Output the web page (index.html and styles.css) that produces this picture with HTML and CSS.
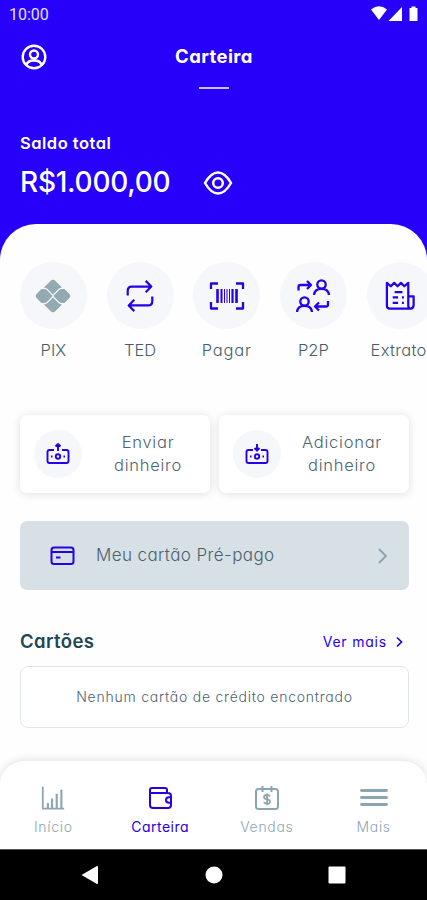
FILE: index.html
```html
<!DOCTYPE html>
<html lang="pt-BR">
<head>
<meta charset="utf-8">
<meta name="viewport" content="width=device-width, initial-scale=1">
<title>Carteira</title>
<link rel="stylesheet" href="styles.css">
</head>
<body>
<div class="app">
  <header class="hero">
    <div class="status">
      <span class="clock">10:00</span>
      <svg class="status-icons" width="50" height="18" viewBox="0 0 50 18" fill="#fff"><path d="M1 4.500Q9 -2 17 4.500L9 15Z"/><path d="M32 2V16H18.500Z"/><path d="M39.500 3h2V1.500h4V3h2V16h-8Z"/></svg>
    </div>
    <div class="topbar">
      <svg class="profile" width="26" height="26" viewBox="0 0 26 26" fill="none" stroke="#fff" stroke-width="2.400"><circle cx="13" cy="13" r="11.300"/><circle cx="13" cy="10.500" r="4"/><path d="M5.500 21Q6.500 16.500 13 16.500T20.500 21"/></svg>
      <h1 class="title">Carteira</h1>
      <span></span>
    </div>
    <div class="mark"></div>
    <p class="balance-label">Saldo total</p>
    <div class="balance">
      <span class="amount">R$1.000,00</span>
      <svg width="30" height="26" viewBox="0 0 30 26" fill="none" stroke="#fff" stroke-width="2.500"><path d="M2 13Q8 2.500 15 2.500T28 13Q22 23.500 15 23.500T2 13Z"/><circle cx="15" cy="13" r="4.800"/></svg>
    </div>
  </header>

  <main class="sheet">
    <nav class="actions">
      <div class="action"><span class="disc"><svg width="36" height="36" viewBox="0 0 36 36" fill="#93aab3"><path d="M9 9.500L15.500 3Q18 .5 20.500 3L27 9.500Q25 9.700 23.500 11L18 16.500L12.500 11Q11 9.700 9 9.500Z"/><path d="M9 26.500L15.500 33Q18 35.500 20.500 33L27 26.500Q25 26.300 23.500 25L18 19.500L12.500 25Q11 26.300 9 26.500Z"/><path d="M6.500 11H9Q10.700 11 12 12.300L17 17.300Q17.700 18 17 18.700L12 23.700Q10.700 25 9 25H6.500L2 20.500Q-.5 18 2 15.500Z"/><path d="M29.500 11H27Q25.300 11 24 12.300L19 17.300Q18.300 18 19 18.700L24 23.700Q25.300 25 27 25H29.500L34 20.500Q36.500 18 34 15.500Z"/></svg></span><span class="action-name">PIX</span></div>
      <div class="action"><span class="disc"><svg width="34" height="36" viewBox="0 0 36 36" class="line bold"><path d="M5 17.500V12.500Q5 8 9.500 8H30M24 2L30 8L24 14M31 18.500V23.500Q31 28 26.500 28H6M12 22L6 28L12 34"/></svg></span><span class="action-name">TED</span></div>
      <div class="action wide"><span class="disc"><svg width="36" height="36" viewBox="0 0 36 36" class="line bold"><path d="M2 11V5.500H9M27 5.500H34V11M2 24V30.500H9M27 30.500H34V24"/><path d="M8.500 11V25M27.500 11V25" stroke-width="2.600"/><path d="M12.500 11V25" stroke-width="2"/><path d="M15.500 11V25M18 11V25M20.500 11V25" stroke-width="1"/><path d="M23.500 11V25" stroke-width="2.200"/></svg></span><span class="action-name">Pagar</span></div>
      <div class="action"><span class="disc"><svg width="36" height="36" viewBox="0 0 36 36" class="line bold"><path d="M3.500 12.500V9Q3.500 7 5.500 7H15M12 3L16 7L12 11"/><circle cx="26.500" cy="6.500" r="4.200"/><path d="M19 17Q19.500 10.800 26.500 10.800T34 17"/><circle cx="9.500" cy="23.500" r="4.200"/><path d="M2 34Q2.500 27.800 9.500 27.800T17 34"/><path d="M33 23V26.500Q33 28.500 31 28.500H21M24 24.500L20 28.500L24 32.500"/></svg></span><span class="action-name">P2P</span></div>
      <div class="action last"><span class="disc"><svg width="35" height="35" viewBox="0 0 36 36" class="line bold"><path d="M29 31.500H7Q4 31.500 4 28.500V5L8 8.500L11.500 5L15 8.500L18.500 5L22 8.500L26 5V28Q26 31.500 28.500 31.500T31.500 28V19H26"/><path d="M12 14.500H20M10 20H15.500M19.500 20H21.500M10 25.500H15.500M19.500 25.500H21.500"/></svg></span><span class="action-name">Extrato</span></div>
    </nav>

    <section class="transfers">
      <div class="transfer"><span class="mini-disc"><svg width="24" height="24" viewBox="0 0 24 24" class="line thin"><path d="M8 8H3.500Q1.500 8 1.500 10V19Q1.500 21 3.500 21H20.500Q22.500 21 22.500 19V10Q22.500 8 20.500 8H16M12 9V2.500M9.500 4.500L12 2L14.500 4.500M5 14.500H6.500M17.500 14.500H19"/><circle cx="12" cy="14.500" r="2.200"/></svg></span><span class="transfer-name">Enviar<br>dinheiro</span></div>
      <div class="transfer add"><span class="mini-disc"><svg width="24" height="24" viewBox="0 0 24 24" class="line thin"><path d="M8 8H3.500Q1.500 8 1.500 10V19Q1.500 21 3.500 21H20.500Q22.500 21 22.500 19V10Q22.500 8 20.500 8H16M12 8.500V2M9.500 6L12 8.700L14.500 6M5 14.500H6.500M17.500 14.500H19"/><circle cx="12" cy="14.500" r="2.200"/></svg></span><span class="transfer-name">Adicionar<br>dinheiro</span></div>
    </section>

    <div class="prepaid">
      <svg width="26" height="20" viewBox="0 0 26 20" class="line"><rect x="1.500" y="1.500" width="22" height="16.500" rx="2.500"/><path d="M2 6H23.500M6 11.500H10.500"/></svg>
      <span class="prepaid-name">Meu cartão Pré-pago</span>
      <svg width="10" height="18" viewBox="0 0 10 18" fill="none" stroke="#8ba2ae" stroke-width="1.800"><path d="M1 2L8 9L1 16"/></svg>
    </div>

    <div class="cards-head">
      <h2>Cartões</h2>
      <span class="more"><span>Ver mais</span><svg width="8" height="12" viewBox="0 0 8 12" fill="none" stroke="#2600f5" stroke-width="1.700"><path d="M1 1.500L5.500 6L1 10.500"/></svg></span>
    </div>
    <div class="empty"><span>Nenhum cartão de crédito encontrado</span></div>

    <nav class="tabs">
      <div class="tab"><svg width="26" height="28" viewBox="0 0 28 28" class="line"><path d="M3 1.500V25.500H26" stroke-width="1.900"/><path d="M8.500 25V19.500M13 25V14.500M18 25V9.500M23 25V5" stroke-width="2.300"/></svg><span>Início</span></div>
      <div class="tab active"><svg width="28" height="28" viewBox="-1 0 28 28" class="line"><path d="M20 8.500V6Q20 4 18 4H5Q3 4 3 6V21Q3 24 6 24H21Q24 24 24 21V12Q24 9 21 9H3M24.500 13.200H22Q19 13.200 19 16T22 18.800H24.500"/></svg><span>Carteira</span></div>
      <div class="tab"><svg width="28" height="28" viewBox="0 0 28 28" class="line"><rect x="3" y="5" width="22" height="20" rx="2.500"/><path d="M9.500 2V8M18.500 2V8"/><path d="M17 12.500Q16.500 11 14 11Q11 11 11 13T14 15.300T17 17.700T14 19.700Q11.500 19.700 11 18M14 9.500V21.300" stroke-width="1.800"/></svg><span>Vendas</span></div>
      <div class="tab"><svg width="28" height="28" viewBox="0 0 28 28" class="line" stroke-linecap="round"><path d="M1.500 6.500H26.500M1.500 13.500H26.500M1.500 20.500H26.500" stroke-width="2.900"/></svg><span>Mais</span></div>
    </nav>
  </main>

  <footer class="system">
    <svg width="18" height="20" viewBox="0 0 18 20" fill="#fff"><path d="M.5 10L16 1Q17 .7 17 2V18Q17 19.300 16 19Z"/></svg>
    <svg width="18" height="18" viewBox="0 0 18 18" fill="#fff"><circle cx="9" cy="9" r="8.500"/></svg>
    <svg width="18" height="18" viewBox="0 0 18 18" fill="#fff"><rect x=".5" y=".5" width="17" height="17" rx="1"/></svg>
  </footer>
</div>
</body>
</html>
```
FILE: styles.css
```css
* { box-sizing: border-box; }
body { margin: 0; font-family: Inter, "Open Sans", sans-serif; font-feature-settings: "cv11" 1; color: #4d6370; }
h1, h2, p { margin: 0; }
svg { display: block; flex: none; }
.line { fill: none; stroke: currentColor; stroke-width: 2; stroke-linejoin: round; }
.bold { stroke-width: 2.3; }
.thin { stroke-width: 1.9; }
.app { width: 427px; height: 900px; overflow: hidden; display: flex; flex-direction: column; background: #2600f9; }
.hero { height: 224px; flex: none; color: #fff; }
.status { height: 28px; padding: 0 7px 0 9px; display: flex; justify-content: space-between; align-items: center; }
.clock { font-family: Roboto, sans-serif; font-size: 16px; line-height: 28px; padding-top: 1px; color: #e5e1ff; }
.status-icons { margin-top: -1px; }
.topbar { height: 56px; padding: 0 20px 0 21px; display: grid; grid-template-columns: 26px 1fr 26px; align-items: center; }
.title { text-align: center; font-size: 18.500px; font-weight: 700; letter-spacing: .4px; line-height: 24px; }
.profile { margin-top: 1px; }
.mark { width: 30px; height: 2px; margin: 3px auto 0; background: #c9c0ff; }
.balance-label { margin: 42px 0 0 20px; font-size: 16.500px; font-weight: 600; letter-spacing: .5px; line-height: 24px; }
.balance { display: flex; align-items: center; gap: 32px; height: 50px; margin: 3px 0 0 20px; }
.amount { width: 151px; margin-top: -3px; font-size: 28px; font-weight: 500; letter-spacing: -.25px; white-space: nowrap; }
.sheet { flex: 1; min-height: 0; display: flex; flex-direction: column; background: #fefefe; border-radius: 36px 36px 0 0; }
.actions { display: flex; gap: 20px; padding: 38px 0 0 20px; height: 191px; overflow: hidden; flex: none; }
.action { width: 66.700px; flex: none; display: flex; flex-direction: column; align-items: center; color: #2600e8; }
.disc { width: 67px; height: 67px; flex: none; border-radius: 50%; background: #f5f7fb; display: grid; place-items: center; }
.action-name { margin-top: 9px; font-size: 16.500px; font-weight: 300; line-height: 24px; color: #455d68; white-space: nowrap; }
.wide .action-name { letter-spacing: .75px; }
.last .action-name { letter-spacing: .3px; margin-right: 3px; }
.transfers { display: grid; grid-template-columns: 1fr 1fr; gap: 9px; padding: 0 18px 0 20px; flex: none; }
.transfer { height: 78px; display: flex; align-items: center; padding: 0 0 0 14px; border-radius: 7px; background: #fff; box-shadow: 0 1px 10px rgba(0,0,0,.12); }
.mini-disc { width: 48px; height: 48px; border-radius: 50%; background: #f5f7fb; display: grid; place-items: center; color: #2600e8; flex: none; }
.transfer-name { flex: 1; text-align: center; font-size: 16.500px; font-weight: 300; letter-spacing: .75px; line-height: 23px; padding-left: 4px; }
.add .transfer-name { padding-right: 6px; padding-left: 0; }
.prepaid { height: 69px; margin: 28px 18px 0 20px; padding: 0 21px 0 30px; flex: none; display: flex; align-items: center; border-radius: 7px; background: #d7e0e5; color: #2600e8; }
.prepaid-name { flex: 1; margin: -2px 0 0 20px; color: #4a606d; font-size: 17px; font-weight: 300; letter-spacing: .4px; }
.cards-head { height: 76px; flex: none; padding: 27px 23px 0 20px; display: flex; justify-content: space-between; align-items: flex-start; }
.cards-head h2 { color: #234653; font-size: 18.500px; line-height: 48px; letter-spacing: .4px; font-weight: 600; }
.more { display: flex; align-items: center; gap: 9px; height: 50px; color: #2600f5; font-size: 14px; letter-spacing: .8px; }
.more span { margin-top: -2px; }
.empty { height: 62px; margin: 0 18px 0 20px; flex: none; display: grid; place-items: center; border: 1.500px solid #e0e5e8; border-radius: 8px; font-size: 14px; font-weight: 300; letter-spacing: .76px; background: #fff; white-space: nowrap; }
.empty span { margin-top: -2px; }
.tabs { height: 88px; margin-top: 33px; flex: none; display: grid; grid-template-columns: repeat(4, 1fr); border-radius: 24px 24px 0 0; background: #fff; box-shadow: 0 -1px 9px rgba(0,0,0,.12); padding-top: 23px; }
.tab { display: flex; flex-direction: column; align-items: center; color: #8da5b0; font-size: 14px; font-weight: 300; letter-spacing: .7px; line-height: 20px; gap: 5px; }
.active { color: #2600e8; font-weight: 400; letter-spacing: .5px; }
.system { flex: 0 0 51px; margin-top: auto; background: #000; border-top: 1px solid #555; padding: 0 81px; display: flex; align-items: center; justify-content: space-between; }
```
